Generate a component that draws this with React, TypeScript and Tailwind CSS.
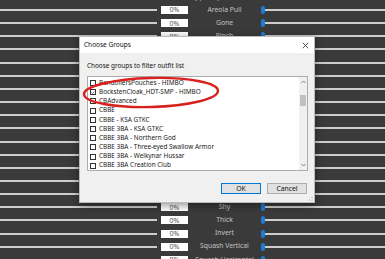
import React from "react";

const rows: string[] = [
  "Nipple Tip",
  "Areola Pull",
  "Gone",
  "Pinch",
  "Pull",
  "Push",
  "Round",
  "Sag",
  "Size",
  "Small",
  "Tilt",
  "Upward",
  "Wide",
  "Flat",
  "Deep",
  "Slim",
  "Shy",
  "Thick",
  "Invert",
  "Squash Vertical",
  "Squash Horizontal",
];

function BgRow({ label, first }: { label: string; first?: boolean }) {
  if (first) {
    return (
      <div className="flex h-[13.17px] shrink-0 items-center">
        <div className="w-[178px]" />
        <span className="h-[6px] w-[6px] bg-white" />
        <span className="ml-[4px] text-[7px] leading-none text-[#c8c8c8]">{label}</span>
      </div>
    );
  }
  return (
    <div className="flex h-[13.17px] shrink-0 items-center">
      <div className="h-[2px] w-[157px] bg-[#cdcdcd]" />
      <div className="ml-[4px] flex h-[8px] w-[27px] items-center justify-center bg-white text-[7px] leading-none text-[#555]">
        0%
      </div>
      <div className="w-[73px] whitespace-nowrap text-center text-[6.8px] leading-none text-[#c4c4c4]">{label}</div>
      <div className="h-[8px] w-[4px] rounded-full bg-[#1f7ad8]" />
      <div className="h-[2px] flex-1 bg-[#cdcdcd]" />
    </div>
  );
}

const items: { name: string; checked?: boolean }[] = [
  { name: "BandoliersPouches - HIMBO" },
  { name: "BockstenCloak_HDT-SMP - HIMBO", checked: true },
  { name: "CBAdvanced" },
  { name: "CBBE" },
  { name: "CBBE - KSA GTKC" },
  { name: "CBBE 3BA - KSA GTKC" },
  { name: "CBBE 3BA - Northern God" },
  { name: "CBBE 3BA - Three-eyed Swallow Armor" },
  { name: "CBBE 3BA - Welkynar Hussar" },
  { name: "CBBE 3BA Creation Club" },
];

function ListItem({ name, checked }: { name: string; checked?: boolean }) {
  return (
    <div className="flex h-[9.2px] items-center pl-[1px]">
      <div className="flex h-[6px] w-[6px] shrink-0 items-center justify-center border-[0.8px] border-[#333] bg-white">
        {checked && (
          <svg width="5" height="5" viewBox="0 0 10 10">
            <path d="M1.5 5.2 L4 7.6 L8.6 2.4" fill="none" stroke="#222" strokeWidth="1.4" />
          </svg>
        )}
      </div>
      <span className="ml-[3px] whitespace-nowrap text-[6.4px] leading-none text-[#1a1a1a]">{name}</span>
    </div>
  );
}

export default function App() {
  return (
    <div
      className="relative h-[259px] w-[385px] overflow-hidden bg-[#3a3a3a]"
      style={{ fontFamily: '"Noto Sans", "Open Sans", sans-serif' }}
    >
      <div className="mt-[-9.75px] flex flex-col">
        {rows.map((r, i) => (
          <BgRow key={i} label={r} first={i === 0} />
        ))}
      </div>

      {/* Dialog */}
      <div className="absolute left-[79px] top-[36px] flex h-[167px] w-[236px] flex-col border border-[#bcbcbc] bg-[#f0f0f0] shadow-[0_2px_8px_rgba(0,0,0,0.45)]">
        <div className="flex h-[16px] shrink-0 items-center justify-between bg-white pl-[4px] pr-[5px]">
          <span className="text-[6.5px] leading-none text-[#111]">Choose Groups</span>
          <svg width="7" height="7" viewBox="0 0 10 10">
            <path d="M1 1 L9 9 M9 1 L1 9" stroke="#222" strokeWidth="1.1" />
          </svg>
        </div>
        <div className="flex flex-1 flex-col px-[7px]">
          <div className="mt-[9.5px] whitespace-nowrap text-[6.4px] leading-none text-[#111]">Choose groups to filter outfit list</div>
          <div className="mt-[7.5px] flex h-[95px] w-[221px] overflow-hidden border border-[#adadad] bg-white">
            <div className="flex min-w-0 flex-1 flex-col overflow-hidden pl-[1px] pt-[1px]">
              {items.map((it, i) => (
                <ListItem key={i} name={it.name} checked={it.checked} />
              ))}
            </div>
            <div className="flex w-[8px] shrink-0 flex-col items-center bg-[#f0f0f0]">
              <svg className="mt-[3px]" width="5" height="4" viewBox="0 0 10 8">
                <path d="M1 6 L5 2 L9 6" fill="none" stroke="#555" strokeWidth="1.4" />
              </svg>
              <div className="mt-[11px] h-[11px] w-[6px] bg-[#c1c1c1]" />
              <div className="flex-1" />
              <svg className="mb-[3px]" width="5" height="4" viewBox="0 0 10 8">
                <path d="M1 2 L5 6 L9 2" fill="none" stroke="#555" strokeWidth="1.4" />
              </svg>
            </div>
          </div>
          <div className="mt-[12px] flex justify-end gap-[6px]">
            <div className="flex h-[11px] w-[40px] items-center justify-center border border-[#0078d7] bg-[#e1e1e1] text-[6.8px] leading-none text-[#111]">
              OK
            </div>
            <div className="flex h-[11px] w-[40px] items-center justify-center border border-[#adadad] bg-[#e1e1e1] text-[6.8px] leading-none text-[#111]">
              Cancel
            </div>
          </div>
        </div>
        <svg className="absolute bottom-[1px] right-[1px]" width="5" height="5" viewBox="0 0 5 5">
          <rect x="3.5" y="1" width="1" height="1" fill="#aaa" />
          <rect x="3.5" y="3.5" width="1" height="1" fill="#aaa" />
          <rect x="1" y="3.5" width="1" height="1" fill="#aaa" />
        </svg>
      </div>

      {/* Red annotation ellipse */}
      <svg className="pointer-events-none absolute left-0 top-0" width="385" height="259">
        <ellipse cx="151" cy="92.5" rx="67" ry="14.5" fill="none" stroke="#d8201e" strokeWidth="2.4" transform="rotate(-1.5 151 92.5)" />
      </svg>
    </div>
  );
}
